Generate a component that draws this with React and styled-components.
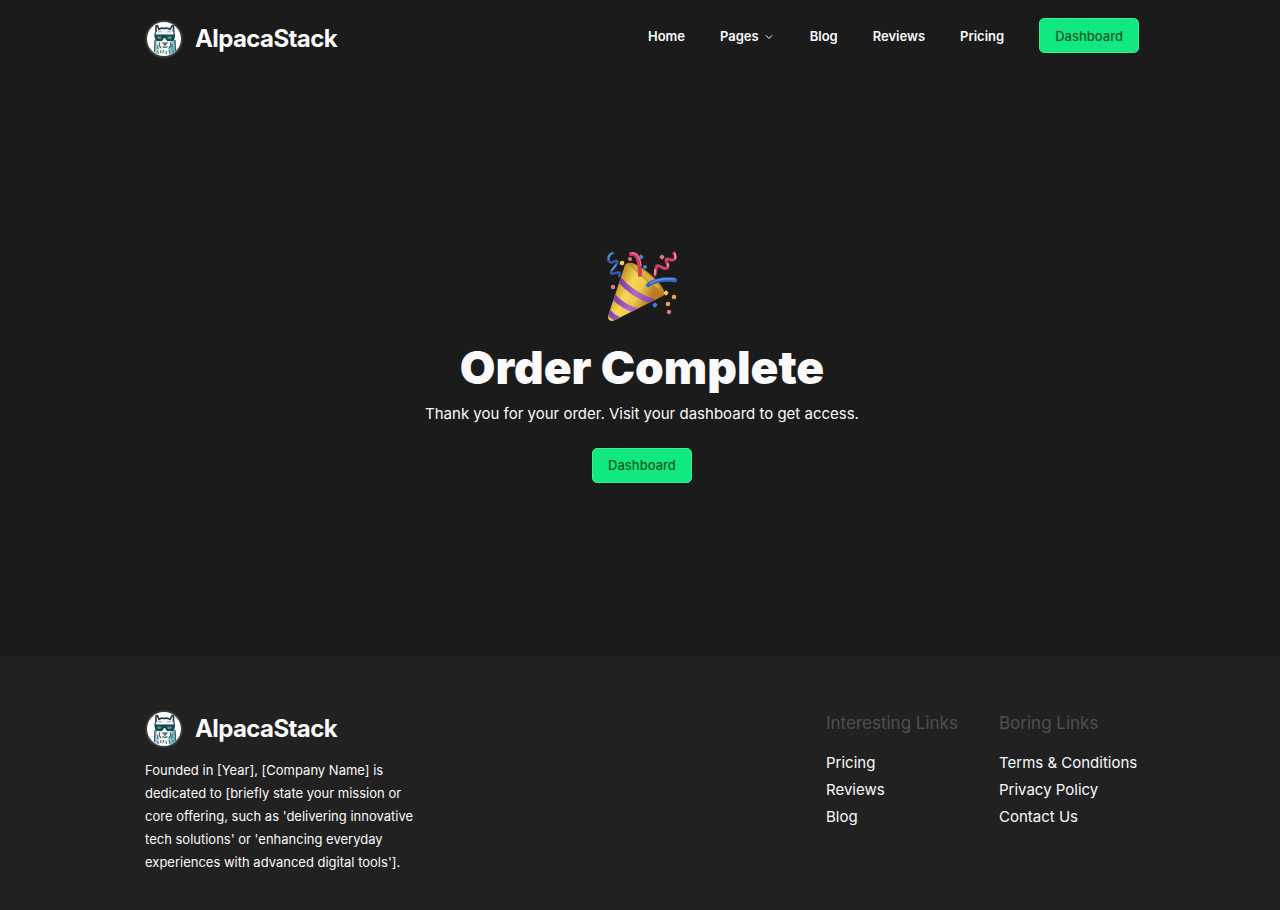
import React from "react";
import styled, { createGlobalStyle } from "styled-components";
import { ChevronDown } from "lucide-react";

const GlobalStyle = createGlobalStyle`
  *, *::before, *::after { box-sizing: border-box; }
  body {
    margin: 0;
    background: #1b1b1b;
    color: #fafafa;
    font-family: Inter, "Liberation Sans", sans-serif;
    font-size: 15px;
    -webkit-font-smoothing: antialiased;
  }
  h1, h2, p, ul { margin: 0; padding: 0; }
  ul { list-style: none; }
  a { color: inherit; text-decoration: none; }
`;

const Page = styled.div`
  display: flex;
  flex-direction: column;
  min-height: 100vh;
`;

const Container = styled.div`
  display: flex;
  flex-wrap: wrap;
  justify-content: space-between;
  align-items: flex-start;
  gap: 24px;
  width: 100%;
  max-width: 998px;
  margin: 0 auto;
  padding-left: 4px;
`;

const Header = styled.header`
  padding: 18px 0;
`;

const BrandLink = styled.a`
  display: flex;
  align-items: center;
  gap: 12px;
  padding-top: 2px;
  font-size: 24px;
  line-height: 38px;
  font-weight: 700;
  letter-spacing: -0.025em;
  svg { display: block; flex: none; }
`;

const Nav = styled.nav`
  display: flex;
  align-items: center;
  gap: 35px;
  font-size: 13px;
  line-height: 20px;
  font-weight: 600;
`;

const MenuButton = styled.button`
  display: flex;
  align-items: center;
  gap: 4px;
  padding: 0;
  border: 0;
  background: none;
  color: inherit;
  font: inherit;
  cursor: pointer;
  svg { margin-top: 2px; }
`;

const ActionButton = styled.button`
  height: 35px;
  padding: 0 15px;
  border: 1px solid #3df08c;
  border-radius: 5px;
  background: #12e880;
  color: #0c5a2a;
  font-family: inherit;
  font-size: 13px;
  line-height: 20px;
  font-weight: 500;
  cursor: pointer;
`;

const Main = styled.main`
  flex: 1;
  display: flex;
  flex-direction: column;
  align-items: center;
  justify-content: center;
  padding-left: 4px;
  text-align: center;
  svg { display: block; }
`;

const Title = styled.h1`
  margin-top: 21px;
  font-size: 46px;
  line-height: 48px;
  font-weight: 900;
`;

const Lead = styled.p`
  margin: 11px 0 22px;
  line-height: 24px;
`;

const Footer = styled.footer`
  padding: 52px 0 36px;
  background: #212121;
`;

const About = styled.div`
  max-width: 276px;
  p {
    margin-top: 11px;
    font-size: 13px;
    line-height: 23px;
  }
`;

const LinkColumns = styled.div`
  display: grid;
  grid-template-columns: 134px 140px;
  gap: 39px;
`;

const ColumnTitle = styled.h2`
  margin-bottom: 11px;
  color: #505050;
  font-size: 17px;
  line-height: 30px;
  font-weight: 400;
`;

const LinkList = styled.ul`
  line-height: 27px;
`;

function AlpacaMark() {
  return (
    <svg width="38" height="38" viewBox="0 0 38 38" aria-hidden="true">
      <circle cx="19" cy="19" r="19" fill="#3a3a3a" />
      <circle cx="19" cy="19" r="17" fill="#ffffff" />
      <path d="M11 10l1-5 2 4 5-1 6 1 2-4 2 5 1 11v11l-4 2H14l-4-2V20z" fill="#f0f5f6" />
      <path d="M29 19l2 5-1 8-5 3-2-7 3-3 1-6z" fill="#79c4c5" />
      <path d="M10 20l-.5 5 .5 8 3 1 1-5-2-4v-6z" fill="#a9d0d6" />
      <path d="M11 12V6l1.500-.5L14 9.500q2-2 5-1 4-1 6 1l2-4 1.500.5v6" fill="none" stroke="#24343f" strokeWidth="1.600" strokeLinejoin="round" />
      <path d="M11 10l-1 5M28.500 10l1 5M10 20l-.5 12M30 20l.5 11" fill="none" stroke="#3f5f6b" strokeWidth="1.300" />
      <path d="M13 12q2-1 4 0M22 12q2-1 4 0" fill="none" stroke="#a0b2b9" strokeWidth="1" />
      <path d="M9.500 14.500h20.500v2l-1 3.500-1 1h-6l-2-3h-1l-2 3h-5l-1.500-1-1-3.500z" fill="#1b434d" />
      <path d="M12 16.500h4.500l-1 2.500H13zM22 16.500h5l-1 2.500h-3z" fill="#43989b" />
      <path d="M15 22q-2 3 1 6M25 22q2 3-1 6M18 23h4l-2 2zM20 25v1.500M17.500 26.500q2.500 2 5 0" fill="none" stroke="#475b66" strokeWidth="1.100" />
      <path d="M12.500 25l.5 4M12.500 31l1 3M16 30l-.5 3M18.500 30l-.5 3M21 31l.5 3M24 30l1 4M27 24v5M28 30v3" fill="none" stroke="#385e68" strokeWidth=".9" />
    </svg>
  );
}

function PartyPopper() {
  return (
    <svg width="72" height="72" viewBox="0 0 72 72" role="img" aria-label="Party popper">
      <defs>
        <linearGradient id="cone" x1="10" y1="36" x2="42" y2="53" gradientUnits="userSpaceOnUse">
          <stop offset="0" stopColor="#c4942d" />
          <stop offset=".35" stopColor="#f8d854" />
          <stop offset=".65" stopColor="#edc84a" />
          <stop offset="1" stopColor="#b97b21" />
        </linearGradient>
        <linearGradient id="stripe" x1="12" y1="40" x2="44" y2="54" gradientUnits="userSpaceOnUse">
          <stop offset="0" stopColor="#7d3eaa" />
          <stop offset=".5" stopColor="#ad68cb" />
          <stop offset="1" stopColor="#8546a4" />
        </linearGradient>
        <clipPath id="coneShape">
          <path d="M19 15Q23 10 32 16 44 23 54 34 61 43 57 46L9 70Q2 73 2 66z" />
        </clipPath>
      </defs>
      <path d="M19 15Q23 10 32 16 44 23 54 34 61 43 57 46L9 70Q2 73 2 66z" fill="url(#cone)" />
      <g clipPath="url(#coneShape)" fill="none" stroke="url(#stripe)" strokeWidth="5.500">
        <path d="M13 29Q26 45 48 52" />
        <path d="M6 45Q17 58 35 62" />
        <path d="M0 59Q6 68 17 71" />
      </g>
      <path d="M22 13Q30 12 43 23 58 36 57 43 53 42 42 32 28 20 22 13z" fill="#bd8925" />
      <path d="M26 15Q33 16 42 24 53 34 54 39 49 37 41 30 30 20 26 15z" fill="#dcae3a" />
      <path d="M25 4Q34 2 34 25" fill="none" stroke="#d13a5f" strokeWidth="4" strokeLinecap="round" />
      <path d="M26 3Q33 3 35 15" fill="none" stroke="#f06b86" strokeWidth="1.500" strokeLinecap="round" />
      <path d="M42 35Q52 28 69 30" fill="none" stroke="#3567bd" strokeWidth="4.500" strokeLinecap="round" />
      <path d="M45 33Q54 28 68 29" fill="none" stroke="#5f93e0" strokeWidth="1.500" strokeLinecap="round" />
      <path d="M7 3Q0 6 3 11 5 14 9 11 13 10 10 15L6 20Q3 25 9 23 16 21 13 26" fill="none" stroke="#315ca7" strokeWidth="2.500" strokeLinecap="round" />
      <path d="M6 3Q2 5 3 9M10 15L6 20" fill="none" stroke="#6c9be1" strokeWidth="1.300" strokeLinecap="round" />
      <path d="M68 3Q72 10 65 10 58 7 61 13 64 20 57 18 50 13 50 19L49 25" fill="none" stroke="#cf3f67" strokeWidth="3" strokeLinecap="round" />
      <path d="M69 4v4M62 14v2M49 20v4" fill="none" stroke="#f18ba5" strokeWidth="2" strokeLinecap="round" />
      <g fill="#ee728d">
        <rect x="54" y="5" width="4" height="4" rx="1" transform="rotate(35 56 7)" />
        <circle cx="24" cy="9" r="2" />
        <circle cx="7" cy="37" r="2.200" />
        <rect x="61" y="60" width="4" height="4" rx="1" transform="rotate(20 63 62)" />
      </g>
      <g fill="#4684db">
        <rect x="33" y="5" width="4" height="4" rx="1" transform="rotate(35 35 7)" />
        <circle cx="39" cy="17" r="2" />
        <rect x="47" y="53" width="4" height="4" rx="1" transform="rotate(40 49 55)" />
      </g>
      <g fill="#f2d155">
        <circle cx="16" cy="13" r="2.300" />
        <rect x="58" y="41" width="4" height="4" rx="1" transform="rotate(40 60 43)" />
      </g>
      <g fill="#eda34b">
        <circle cx="68" cy="47" r="2.300" />
        <circle cx="62" cy="54" r="2.300" />
      </g>
    </svg>
  );
}

function Brand() {
  return (
    <BrandLink href="#home">
      <AlpacaMark />
      <span>AlpacaStack</span>
    </BrandLink>
  );
}

function FooterLinks({ title, links }) {
  return (
    <div>
      <ColumnTitle>{title}</ColumnTitle>
      <LinkList>
        {links.map((label) => (
          <li key={label}>
            <a href="#link">{label}</a>
          </li>
        ))}
      </LinkList>
    </div>
  );
}

export default function App() {
  return (
    <>
      <GlobalStyle />
      <Page>
        <Header>
          <Container>
            <Brand />
            <Nav aria-label="Main">
              <a href="#home">Home</a>
              <MenuButton type="button" aria-haspopup="menu">
                Pages
                <ChevronDown size={12} strokeWidth={2} aria-hidden="true" />
              </MenuButton>
              <a href="#blog">Blog</a>
              <a href="#reviews">Reviews</a>
              <a href="#pricing">Pricing</a>
              <ActionButton type="button">Dashboard</ActionButton>
            </Nav>
          </Container>
        </Header>
        <Main>
          <PartyPopper />
          <Title>Order Complete</Title>
          <Lead>Thank you for your order. Visit your dashboard to get access.</Lead>
          <ActionButton type="button">Dashboard</ActionButton>
        </Main>
        <Footer>
          <Container>
            <About>
              <Brand />
              <p>
                Founded in [Year], [Company Name] is dedicated to [briefly state your mission or core offering, such as
                'delivering innovative tech solutions' or 'enhancing everyday experiences with advanced digital tools'].
              </p>
            </About>
            <LinkColumns>
              <FooterLinks title="Interesting Links" links={["Pricing", "Reviews", "Blog"]} />
              <FooterLinks title="Boring Links" links={["Terms & Conditions", "Privacy Policy", "Contact Us"]} />
            </LinkColumns>
          </Container>
        </Footer>
      </Page>
    </>
  );
}
